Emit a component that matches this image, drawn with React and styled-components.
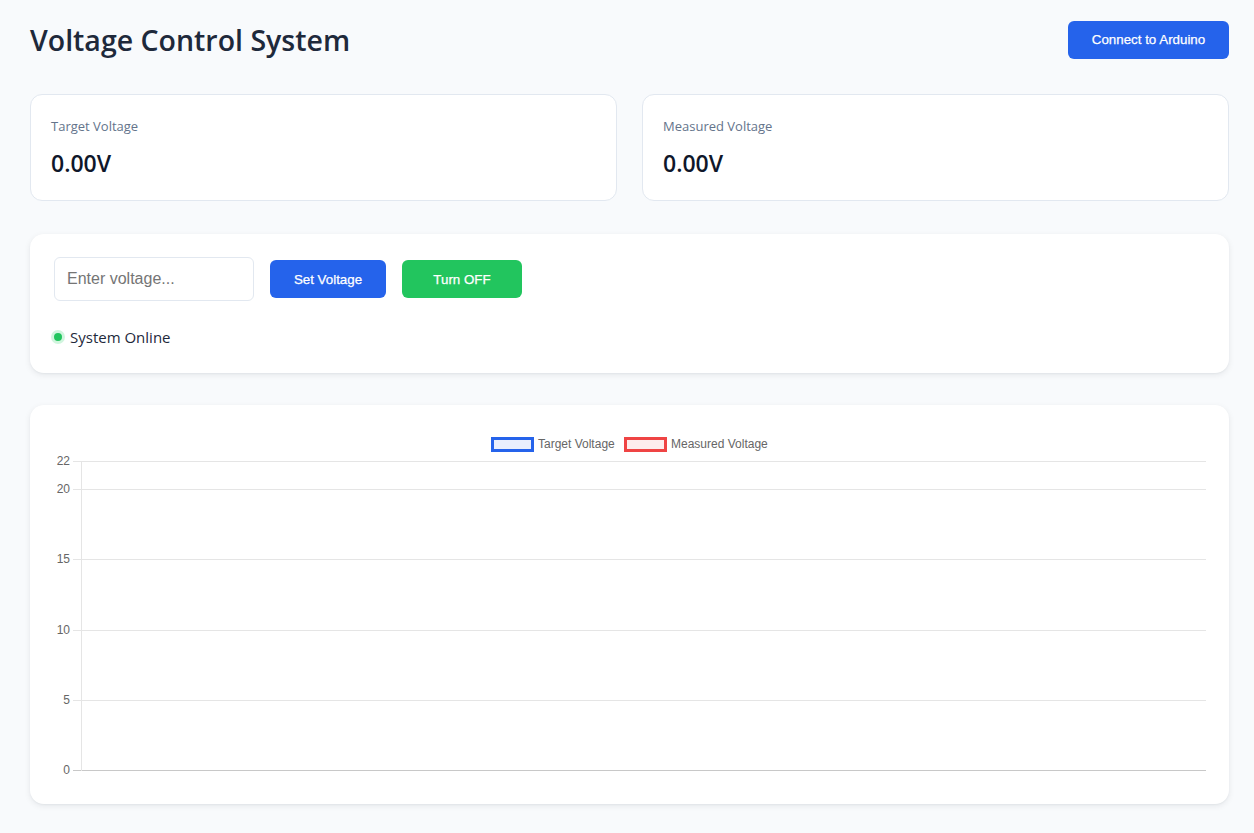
import React from "react";
import styled, { createGlobalStyle } from "styled-components";

const GlobalStyle = createGlobalStyle`
  body {
    margin: 0;
    background: #f8fafc;
    font-family: "Open Sans", "Noto Sans", sans-serif;
    color: #1e293b;
  }
`;

const Page = styled.div`
  padding: 20px 25px 28px 30px;
  display: flex;
  flex-direction: column;
`;

const Header = styled.header`
  display: flex;
  align-items: center;
  justify-content: space-between;
  height: 39px;
  margin-bottom: 35px;
`;

const Title = styled.h1`
  margin: 0;
  font-size: 28.5px;
  font-weight: 600;
  color: #1e293b;
`;

const Button = styled.button`
  border: none;
  border-radius: 6px;
  background: ${props => props.color || "#2563eb"};
  color: #fff;
  font-family: "Liberation Sans", Arial, sans-serif;
  font-size: 13.33px;
  font-weight: 400;
  width: ${props => props.width}px;
  height: 38px;
  padding: 0;
  cursor: pointer;
  -webkit-text-stroke: 0.25px #fff;
`;

const Stats = styled.div`
  display: grid;
  grid-template-columns: 1fr 1fr;
  gap: 25px;
  margin-bottom: 33px;
`;

const StatCard = styled.div`
  background: #fff;
  border: 1px solid #e2e8f0;
  border-radius: 12px;
  height: 107px;
  box-sizing: border-box;
  padding: 22px 20px 0;
`;

const StatLabel = styled.div`
  font-size: 13px;
  color: #64748b;
  line-height: 18px;
`;

const StatValue = styled.div`
  margin-top: 13px;
  font-size: 23px;
  font-weight: 600;
  color: #0f172a;
  line-height: 30px;
`;

const Panel = styled.section`
  background: #fff;
  border-radius: 14px;
  box-shadow: 0 2px 6px rgba(15, 23, 42, 0.08), 0 1px 2px rgba(15, 23, 42, 0.04);
  box-sizing: border-box;
  height: ${props => props.height}px;
  padding: ${props => props.pad};
  margin-bottom: ${props => props.mb || 0}px;
`;

const Controls = styled.div`
  display: flex;
  align-items: center;
  gap: 16px;
`;

const Input = styled.input`
  width: 200px;
  height: 44px;
  box-sizing: border-box;
  border: 1px solid #e2e8f0;
  border-radius: 6px;
  padding: 0 12px;
  font-family: "Liberation Sans", Arial, sans-serif;
  font-size: 16px;
  color: #1e293b;
  outline: none;
  &::placeholder {
    color: #757575;
  }
`;

const Status = styled.div`
  display: flex;
  align-items: center;
  gap: 5px;
  margin-top: 26px;
  margin-left: -3px;
  font-size: 15px;
  color: #1e293b;
`;

const Dot = styled.span`
  width: 8px;
  height: 8px;
  border-radius: 50%;
  background: #22c55e;
  border: 3px solid #d1f5de;
`;

const ChartBox = styled.div`
  width: 100%;
  height: 351px;
`;

const ticks = [0, 5, 10, 15, 20, 22];

const Chart = () => {
  const top = 32;
  const bottom = 341;
  const left = 27;
  const right = 1152;
  const y = v => bottom - (v / 22) * (bottom - top);
  return (
    <svg width="1152" height="351" viewBox="0 0 1152 351" fontFamily="Liberation Sans, Arial, sans-serif">
      <rect x="438.5" y="9.5" width="40" height="12" fill="rgba(37,99,235,0.1)" stroke="#2563eb" strokeWidth="3" />
      <text x="484" y="19" fontSize="12" fill="#666">Target Voltage</text>
      <rect x="571.5" y="9.5" width="40" height="12" fill="rgba(239,68,68,0.1)" stroke="#ef4444" strokeWidth="3" />
      <text x="617" y="19" fontSize="12" fill="#666">Measured Voltage</text>
      {ticks.map(t => (
        <g key={t}>
          <line x1={left - 8} x2={right} y1={Math.round(y(t)) + 0.5} y2={Math.round(y(t)) + 0.5}
            stroke={t === 0 ? "#c8c8c8" : "#e5e5e5"} strokeWidth="1" />
          <text x={left - 11} y={Math.round(y(t)) + 4} fontSize="12" fill="#666" textAnchor="end">{t}</text>
        </g>
      ))}
      <line x1={left + 0.5} x2={left + 0.5} y1={top} y2={bottom + 1} stroke="#e5e5e5" strokeWidth="1" />
    </svg>
  );
};

const App = () => {
  return (
    <Page>
      <GlobalStyle />
      <Header>
        <Title>Voltage Control System</Title>
        <Button width={161}>Connect to Arduino</Button>
      </Header>
      <Stats>
        <StatCard>
          <StatLabel>Target Voltage</StatLabel>
          <StatValue>0.00V</StatValue>
        </StatCard>
        <StatCard>
          <StatLabel>Measured Voltage</StatLabel>
          <StatValue>0.00V</StatValue>
        </StatCard>
      </Stats>
      <Panel height={139} pad="23px 24px" mb={32}>
        <Controls>
          <Input placeholder="Enter voltage..." />
          <Button width={116}>Set Voltage</Button>
          <Button width={120} color="#22c55e">Turn OFF</Button>
        </Controls>
        <Status>
          <Dot />
          System Online
        </Status>
      </Panel>
      <Panel height={399} pad="24px 23px 24px 24px">
        <ChartBox>
          <Chart />
        </ChartBox>
      </Panel>
    </Page>
  );
};

export default App;
